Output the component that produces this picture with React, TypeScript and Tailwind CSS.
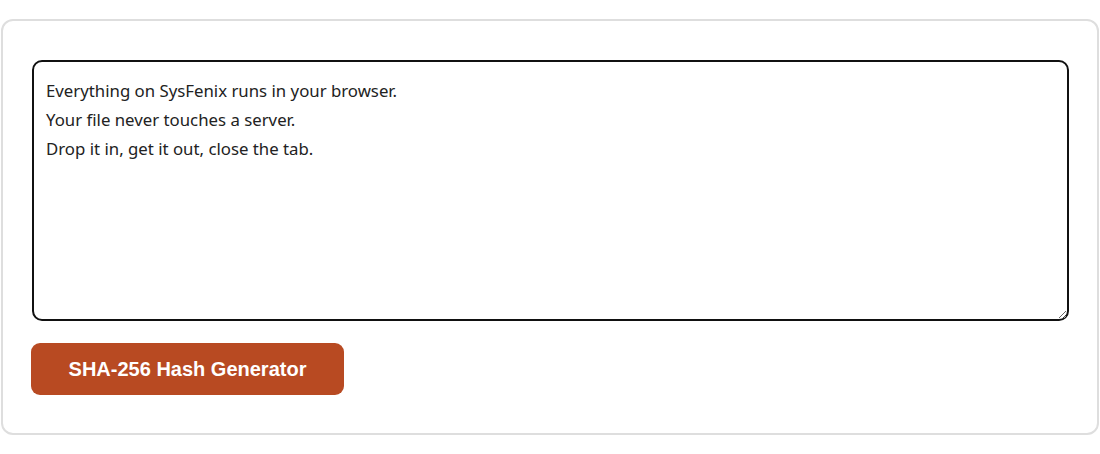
import React from 'react';

const DEFAULT_TEXT = `Everything on SysFenix runs in your browser.
Your file never touches a server.
Drop it in, get it out, close the tab.`;

export default function App() {
  const [text, setText] = React.useState(DEFAULT_TEXT);

  return (
    <div className="bg-white pt-[19px] px-px min-h-screen">
      <section className="rounded-xl border-2 border-[#dedede] bg-white pl-[29px] pr-[28px] pt-[39px] pb-[38px]">
        <textarea
          value={text}
          onChange={(e) => setText(e.target.value)}
          spellCheck={false}
          className="block w-full h-[261px] rounded-[10px] border-2 border-[#111] px-[12px] py-[14px] text-[16.8px] leading-[29px] text-[#222] outline-none"
          style={{ fontFamily: '"Noto Sans", "Open Sans", sans-serif' }}
        />
        <button
          type="button"
          className="mt-[22px] -ml-px block w-[313px] h-[52px] rounded-[9px] bg-[#b84a22] text-white text-[20px] font-bold"
          style={{ fontFamily: '"Liberation Sans", Arial, sans-serif' }}
        >
          SHA-256 Hash Generator
        </button>
      </section>
    </div>
  );
}
